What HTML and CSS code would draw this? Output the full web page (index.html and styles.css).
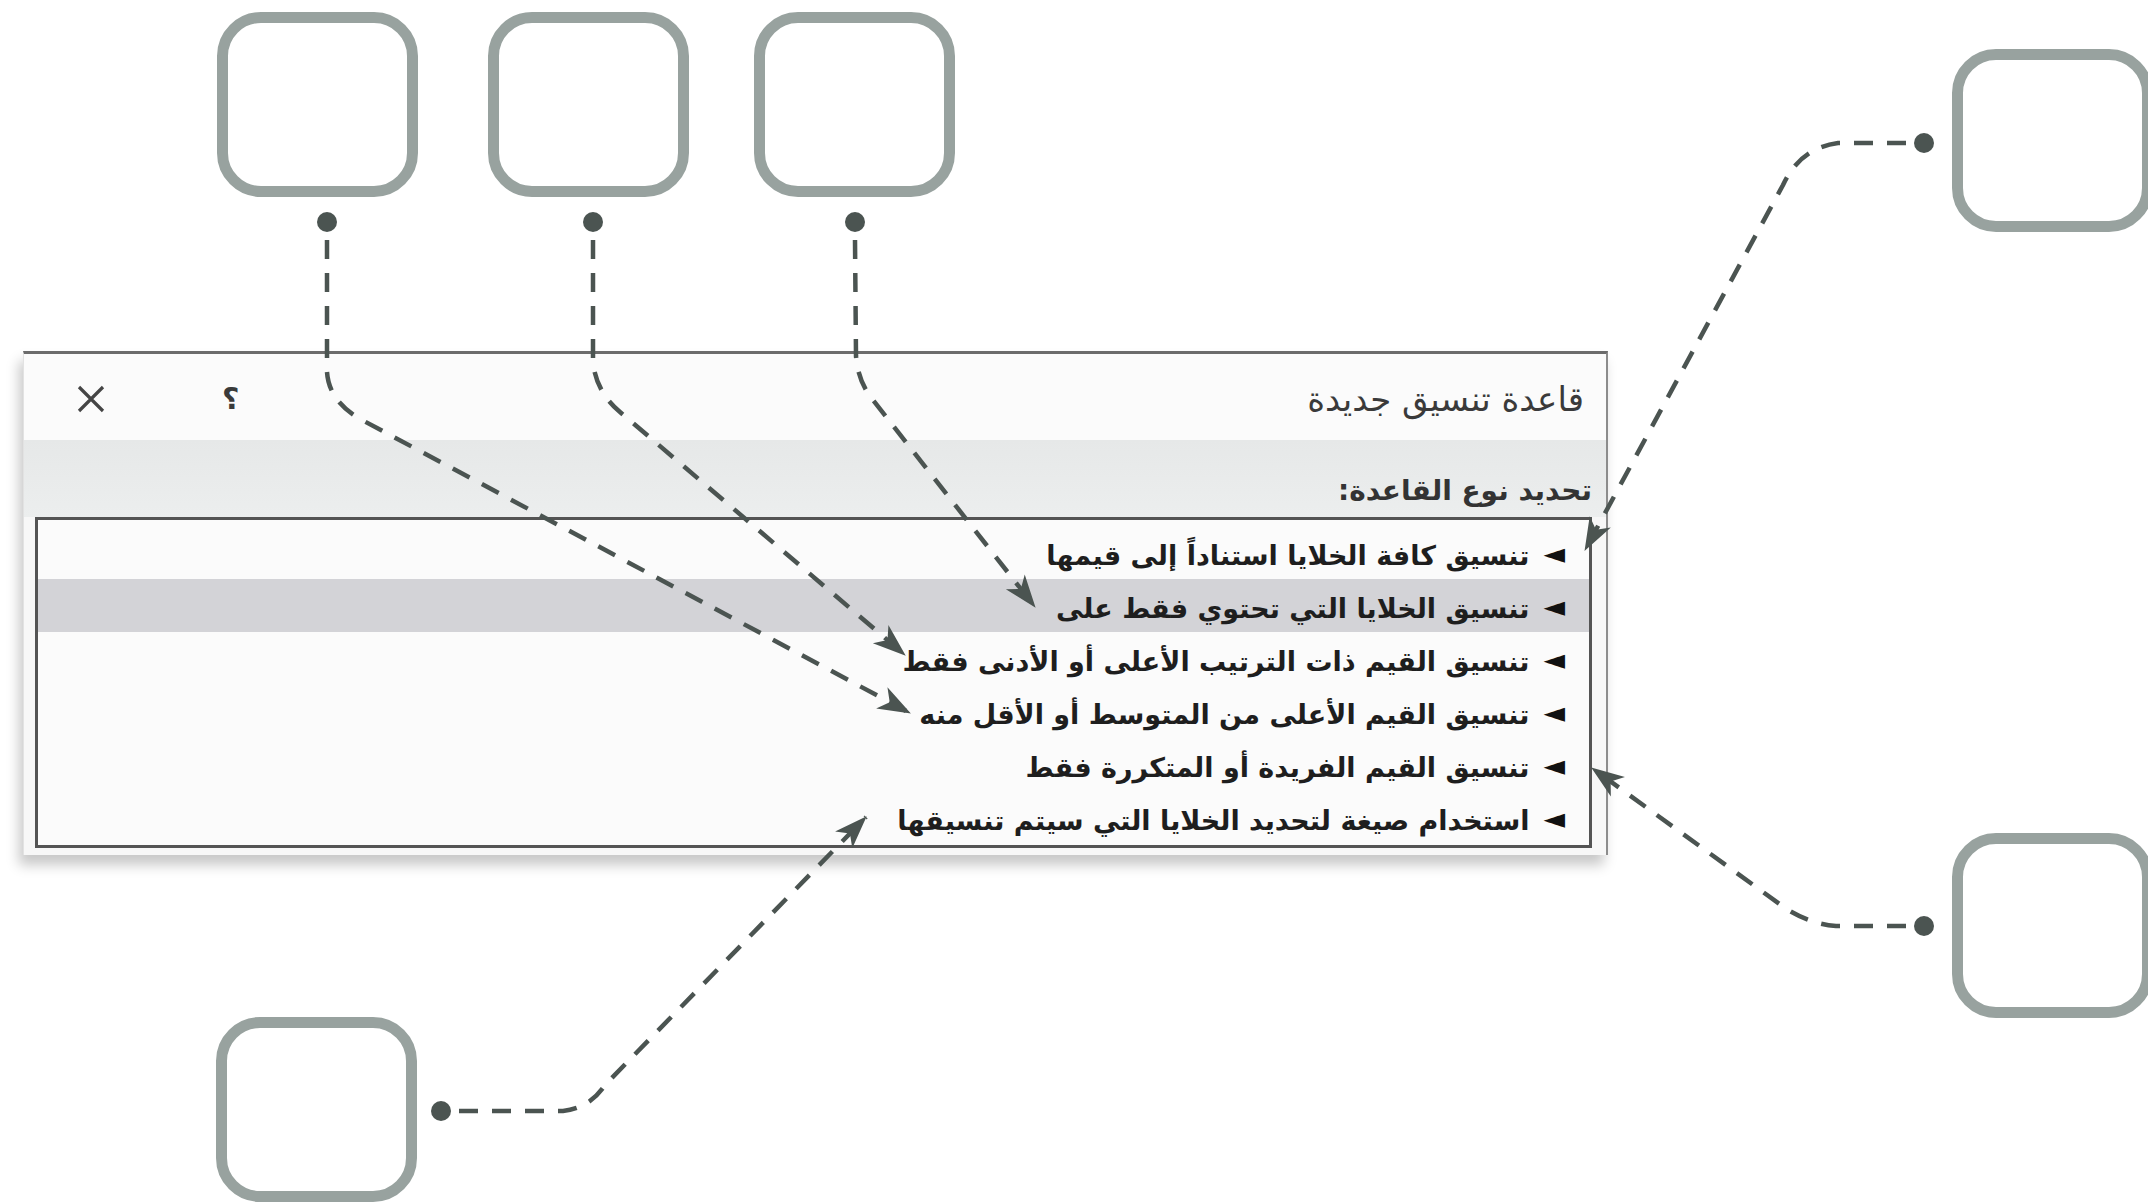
FILE: index.html
```html
<!DOCTYPE html>
<html lang="ar">
<head>
<meta charset="utf-8">
<title>قاعدة تنسيق جديدة</title>
<link rel="stylesheet" href="styles.css">
</head>
<body>
<div class="canvas">
  <div class="callout c1"></div>
  <div class="callout c2"></div>
  <div class="callout c3"></div>
  <div class="callout c4"></div>
  <div class="callout c5"></div>
  <div class="callout c6"></div>

  <div class="dialog">
    <div class="titlebar">
      <div class="title">قاعدة تنسيق جديدة</div>
      <div class="tools">
        <span class="help">؟</span>
        <svg class="close" width="30" height="30" viewBox="0 0 30 30"><path d="M3 3 L27 27 M27 3 L3 27" stroke="#454545" stroke-width="3.2" fill="none"/></svg>
      </div>
    </div>
    <div class="band">تحديد نوع القاعدة:</div>
    <ul class="rules">
      <li class="rule"><span class="tri">◄</span><span>تنسيق كافة الخلايا استناداً إلى قيمها</span></li>
      <li class="rule selected"><span class="tri">◄</span><span>تنسيق الخلايا التي تحتوي فقط على</span></li>
      <li class="rule"><span class="tri">◄</span><span>تنسيق القيم ذات الترتيب الأعلى أو الأدنى فقط</span></li>
      <li class="rule"><span class="tri">◄</span><span>تنسيق القيم الأعلى من المتوسط أو الأقل منه</span></li>
      <li class="rule"><span class="tri">◄</span><span>تنسيق القيم الفريدة أو المتكررة فقط</span></li>
      <li class="rule"><span class="tri">◄</span><span>استخدام صيغة لتحديد الخلايا التي سيتم تنسيقها</span></li>
    </ul>
  </div>

  <svg class="wires" width="2148" height="1204" viewBox="0 0 2148 1204">
    <defs>
      <marker id="ah" viewBox="-34 -14 36 28" refX="0" refY="0" markerWidth="36" markerHeight="28" markerUnits="userSpaceOnUse" orient="auto">
        <path d="M1,0 L-32,-12 L-23,0 L-32,12 Z" fill="#4b5451"/>
      </marker>
    </defs>
    <g class="dots" fill="#4b5451">
      <circle cx="327" cy="222" r="10"/>
      <circle cx="593" cy="222" r="10"/>
      <circle cx="855" cy="222" r="10"/>
      <circle cx="1924" cy="143" r="10"/>
      <circle cx="1924" cy="926" r="10"/>
      <circle cx="441" cy="1111" r="10"/>
    </g>
    <g class="lines" fill="none" stroke="#4b5451" stroke-width="4.5" stroke-dasharray="19 14" marker-end="url(#ah)">
      <path d="M327,240 L327,372 Q329,402 362,420 L910,713"/>
      <path d="M593,240 L593,362 Q596,392 620,412 L905,655"/>
      <path d="M855,240 L856,356 Q858,382 873,400 L1035,607"/>
      <path d="M1906,143 L1838,143 Q1800,148 1783,185 L1585,550"/>
      <path d="M1906,926 L1836,926 Q1810,924 1785,908 L1592,768"/>
      <path d="M459,1111 L563,1111 Q590,1108 605,1085 L866,817"/>
    </g>
  </svg>
</div>
</body>
</html>
```

FILE: styles.css
```css
html, body {
  margin: 0;
  padding: 0;
  background: #ffffff;
}

.canvas {
  position: relative;
  width: 2148px;
  height: 1204px;
  overflow: hidden;
  background: #ffffff;
  font-family: "DejaVu Sans", "Noto Sans", sans-serif;
}

/* empty callout boxes of the diagram */
.callout {
  position: absolute;
  box-sizing: border-box;
  width: 201px;
  height: 185px;
  border: 11px solid #98a29f;
  border-radius: 44px;
  background: #ffffff;
}
.c1 { left: 217px; top: 12px; }
.c2 { left: 488px; top: 12px; }
.c3 { left: 754px; top: 12px; }
.c4 { left: 1952px; top: 49px; height: 183px; }
.c5 { left: 1952px; top: 833px; }
.c6 { left: 216px; top: 1017px; }

/* dialog */
.dialog {
  position: absolute;
  left: 23px;
  top: 351px;
  width: 1585px;
  height: 504px;
  box-sizing: border-box;
  border-top: 3px solid #6c6c6c;
  border-right: 2px solid #8c8c8c;
  border-left: 1px solid #e2e2e2;
  background: #f7f7f7;
  box-shadow: -4px 10px 12px rgba(0, 0, 0, 0.22);
  display: flex;
  flex-direction: column;
}

.titlebar {
  height: 86px;
  flex: none;
  display: flex;
  flex-direction: row-reverse;
  justify-content: space-between;
  align-items: center;
  background: #fbfbfb;
  padding: 0 22px 0 0;
  direction: ltr;
}

.title {
  direction: rtl;
  font-size: 34px;
  color: #3a3a3a;
  line-height: 40px;
  padding-top: 4px;
}

.tools {
  display: flex;
  flex-direction: row-reverse;
  align-items: center;
  gap: 116px;
  padding-left: 52px;
  padding-top: 4px;
}

.help {
  font-size: 30px;
  font-weight: bold;
  color: #3a3a3a;
  line-height: 34px;
}

.close {
  display: block;
}

.band {
  height: 77px;
  flex: none;
  box-sizing: border-box;
  direction: rtl;
  padding: 33px 14px 0 0;
  font-size: 28px;
  font-weight: bold;
  line-height: 36px;
  color: #333333;
  background: linear-gradient(#e6e8e8, #eceeee);
}

.rules {
  list-style: none;
  margin: 0 14px 0 11px;
  padding: 6px 0 0 0;
  height: 331px;
  box-sizing: border-box;
  border: 3px solid #545454;
  background: #fbfbfb;
  direction: rtl;
}

.rule {
  height: 53px;
  display: flex;
  align-items: center;
  gap: 14px;
  padding: 6px 24px 0 0;
  box-sizing: border-box;
  font-size: 27px;
  font-weight: bold;
  color: #1e1e1e;
}

.rule.selected {
  background: #d3d3d7;
}

.tri {
  flex: none;
  font-size: 28px;
  line-height: 1;
  font-weight: normal;
  color: #111111;
  margin-top: -4px;
}

.wires {
  position: absolute;
  left: 0;
  top: 0;
  pointer-events: none;
}
```
